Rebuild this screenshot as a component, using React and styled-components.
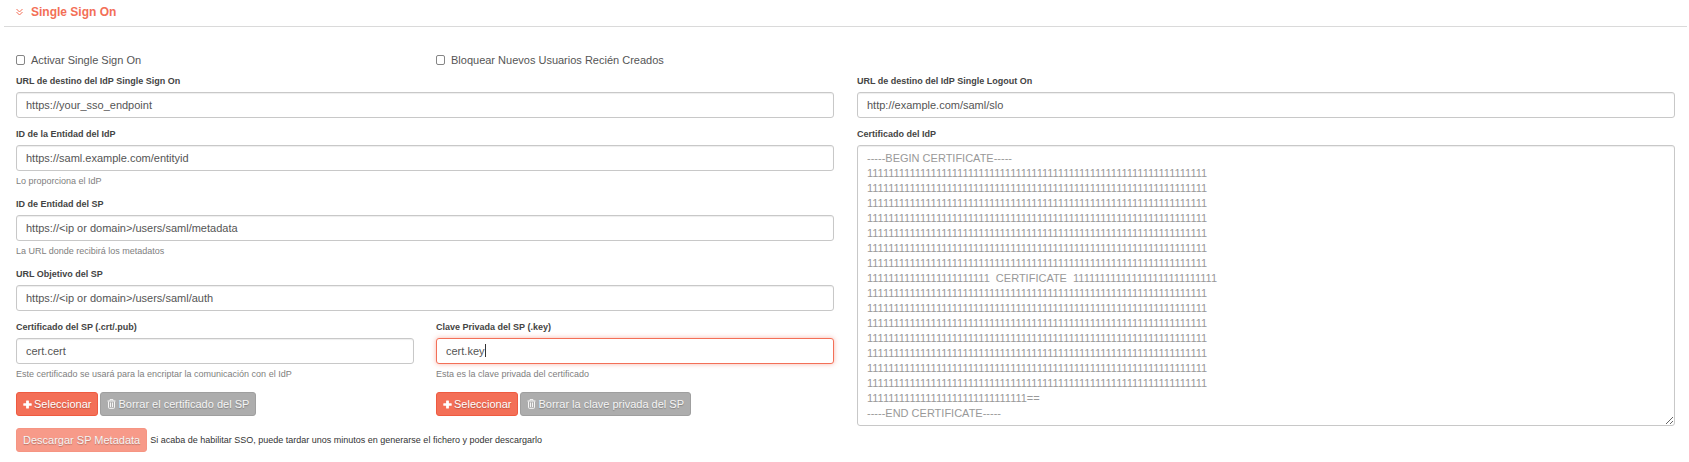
import React, { useEffect, useRef } from "react";
import styled, { createGlobalStyle, css } from "styled-components";

const GlobalStyle = createGlobalStyle`
  *, *::before, *::after { box-sizing: border-box; }
  body {
    margin: 0;
    background: #fff;
    color: #444;
    font-family: "Liberation Sans", Arial, sans-serif;
    font-size: 11px;
  }
`;

const Fieldset = styled.section`
  padding-left: 4px;
  padding-right: 2px;
`;

const Legend = styled.h2`
  display: flex;
  align-items: center;
  gap: 8px;
  height: 27px;
  margin: 0 0 23px;
  padding: 0 12px 3px;
  border-bottom: 1px solid #dadada;
  color: #f36f57;
  font-size: 12px;
  line-height: 16px;
`;

const Form = styled.form`
  padding: 0 12px;
`;

const Columns = styled.div`
  display: grid;
  grid-template-columns: minmax(0, 1fr) minmax(0, 1fr);
  column-gap: ${(p) => p.$gap}px;
`;

const CheckLabel = styled.label`
  display: flex;
  align-items: center;
  gap: 6px;
  height: 20px;
  margin-bottom: 1px;
  color: #555;
`;

const Checkbox = styled.input`
  appearance: none;
  width: 9px;
  height: 10px;
  margin: 0;
  border: 1px solid #858585;
  border-radius: 2px;
  background: #fff;
`;

const Field = styled.div`
  margin-bottom: ${(p) => (p.$helped ? 2 : 6)}px;
`;

const FieldLabel = styled.label`
  display: block;
  color: #444;
  font-size: 9px;
  font-weight: bold;
  line-height: 21px;
`;

const control = css`
  display: block;
  width: 100%;
  border: 1px solid #c8c8c8;
  border-radius: 3px;
  background: #fff;
  box-shadow: inset 0 1px 1px rgba(0, 0, 0, 0.07);
  color: #555;
  font: 11px/15px "Liberation Sans", Arial, sans-serif;
  outline: none;

  &:focus {
    border-color: #f36f57;
    box-shadow: 0 0 5px rgba(243, 111, 87, 0.5);
  }
`;

const InputWrap = styled.div`
  position: relative;
`;

const TextInput = styled.input`
  ${control}
  height: 26px;
  padding: 0 9px;
  caret-color: transparent;
`;

const Caret = styled.span`
  position: absolute;
  top: 6px;
  left: 49px;
  width: 1px;
  height: 13px;
  background: #333;
  pointer-events: none;
`;

const TextArea = styled.textarea`
  ${control}
  padding: 5px 9px 4px;
  resize: both;

  &::placeholder {
    color: #999;
    opacity: 1;
  }
`;

const Help = styled.p`
  margin: 0;
  color: #808080;
  font-size: 9px;
  line-height: 21px;
`;

const Actions = styled.div`
  display: flex;
  align-items: center;
  gap: ${(p) => p.$gap}px;
  margin-top: ${(p) => p.$top}px;
`;

const tones = {
  primary: ["#f36f57", "#ef5a40"],
  muted: ["#adadad", "#9f9f9f"],
  faded: ["#f79a89", "#f69583"],
};

const Button = styled.button`
  display: inline-flex;
  align-items: center;
  gap: 2px;
  height: 24px;
  padding: 0 6px;
  border: 1px solid ${(p) => tones[p.$tone][1]};
  border-radius: 3px;
  background: ${(p) => tones[p.$tone][0]};
  color: ${(p) => (p.$tone === "primary" ? "#fff" : "#f5f5f5")};
  font: 11px/15px "Liberation Sans", Arial, sans-serif;
  text-shadow: 0 1px 1px rgba(0, 0, 0, 0.25);
  white-space: nowrap;
`;

const Note = styled.span`
  color: #333;
  font-size: 9px;
`;

const ChevronsIcon = () => (
  <svg width="7" height="8" viewBox="0 0 7 8" fill="none" stroke="currentColor" aria-hidden="true">
    <path d="M0.5 1 L3.5 4 L6.5 1 M0.5 4 L3.5 7 L6.5 4" />
  </svg>
);

const PlusIcon = () => (
  <svg width="9" height="9" viewBox="0 0 9 9" fill="currentColor" aria-hidden="true">
    <path d="M3.6 0.5h1.8q.5 0 .5.5v2.3h2.3q.5 0 .5.5v1.4q0 .5-.5.5H5.900v2.300q0 .5-.5.5H3.600q-.5 0-.5-.5V5.700H.800q-.5 0-.5-.5V3.800q0-.5.5-.5h2.300V1q0-.5.5-.5z" />
  </svg>
);

const TrashIcon = () => (
  <svg width="9" height="10" viewBox="0 0 9 10" fill="none" stroke="currentColor" aria-hidden="true">
    <path d="M0.500 2H8.500M3 1.800V.600H6V1.800" />
    <path d="M1.500 2.500V8.500q0 .8.800.8H6.700q.8 0 .8-.8V2.500" />
    <path d="M3.500 3.500V8M5.500 3.500V8" />
  </svg>
);

const ones = (n) => "1".repeat(n);
const certificate = [
  "-----BEGIN CERTIFICATE-----",
  ...Array(7).fill(ones(64)),
  `${ones(23)}  CERTIFICATE  ${ones(27)}`,
  ...Array(7).fill(ones(64)),
  `${ones(30)}==`,
  "-----END CERTIFICATE-----",
].join("\n");

function TextField({ id, label, value, help, inputRef }) {
  return (
    <Field $helped={Boolean(help)}>
      <FieldLabel htmlFor={id}>{label}</FieldLabel>
      <InputWrap>
        <TextInput id={id} type="text" defaultValue={value} ref={inputRef} />
        {inputRef && <Caret />}
      </InputWrap>
      {help && <Help>{help}</Help>}
    </Field>
  );
}

function FileActions({ removeLabel }) {
  return (
    <Actions $gap={2} $top={7}>
      <Button type="button" $tone="primary">
        <PlusIcon />
        Seleccionar
      </Button>
      <Button type="button" $tone="muted">
        <TrashIcon />
        {removeLabel}
      </Button>
    </Actions>
  );
}

export default function App() {
  const keyInput = useRef(null);

  useEffect(() => {
    const input = keyInput.current;
    input.focus();
    input.setSelectionRange(input.value.length, input.value.length);
  }, []);

  return (
    <>
      <GlobalStyle />
      <Fieldset>
        <Legend>
          <ChevronsIcon />
          Single Sign On
        </Legend>
        <Form>
          <Columns $gap={23}>
            <Columns $gap={22}>
              <CheckLabel>
                <Checkbox type="checkbox" />
                Activar Single Sign On
              </CheckLabel>
              <CheckLabel>
                <Checkbox type="checkbox" />
                Bloquear Nuevos Usuarios Recién Creados
              </CheckLabel>
            </Columns>
          </Columns>
          <Columns $gap={23}>
            <div>
              <TextField id="sso-url" label="URL de destino del IdP Single Sign On" value="https://your_sso_endpoint" />
              <TextField
                id="idp-entity"
                label="ID de la Entidad del IdP"
                value="https://saml.example.com/entityid"
                help="Lo proporciona el IdP"
              />
              <TextField
                id="sp-entity"
                label="ID de Entidad del SP"
                value="https://<ip or domain>/users/saml/metadata"
                help="La URL donde recibirá los metadatos"
              />
              <TextField id="sp-target" label="URL Objetivo del SP" value="https://<ip or domain>/users/saml/auth" />
              <Columns $gap={22}>
                <div>
                  <TextField
                    id="sp-cert"
                    label="Certificado del SP (.crt/.pub)"
                    value="cert.cert"
                    help="Este certificado se usará para la encriptar la comunicación con el IdP"
                  />
                  <FileActions removeLabel="Borrar el certificado del SP" />
                </div>
                <div>
                  <TextField
                    id="sp-key"
                    label="Clave Privada del SP (.key)"
                    value="cert.key"
                    help="Esta es la clave privada del certificado"
                    inputRef={keyInput}
                  />
                  <FileActions removeLabel="Borrar la clave privada del SP" />
                </div>
              </Columns>
              <Actions $gap={3} $top={12}>
                <Button type="button" $tone="faded">
                  Descargar SP Metadata
                </Button>
                <Note>Si acaba de habilitar SSO, puede tardar unos minutos en generarse el fichero y poder descargarlo</Note>
              </Actions>
            </div>
            <div>
              <TextField id="slo-url" label="URL de destino del IdP Single Logout On" value="http://example.com/saml/slo" />
              <Field>
                <FieldLabel htmlFor="idp-cert">Certificado del IdP</FieldLabel>
                <TextArea id="idp-cert" rows={18} placeholder={certificate} />
              </Field>
            </div>
          </Columns>
        </Form>
      </Fieldset>
    </>
  );
}
